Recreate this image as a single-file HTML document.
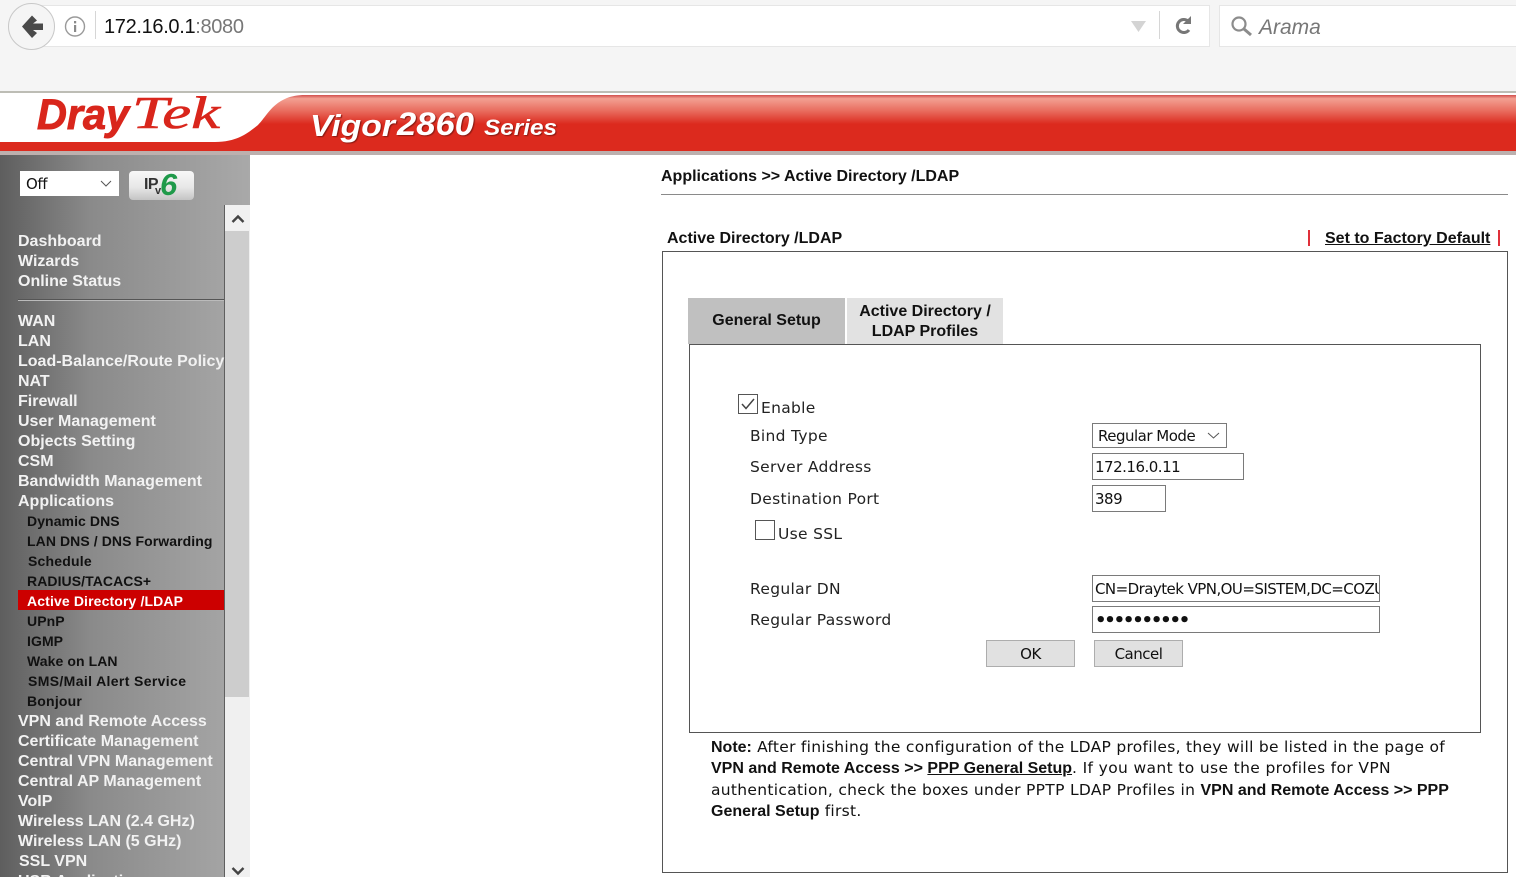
<!DOCTYPE html>
<html><head><meta charset="utf-8"><title>Vigor2860</title>
<style>
html,body{margin:0;padding:0;background:#fff;overflow:hidden}
html{width:1516px;height:877px}
body{width:1516px;height:877px;position:relative;overflow:hidden;font-family:"Liberation Sans",sans-serif;color:#000}
.a{position:absolute;white-space:nowrap}
.m,.s{position:absolute;white-space:nowrap;height:20px;line-height:20px;font-weight:bold}
.m{left:18px;font-size:16px;color:#f2f2f2}
.s{left:27px;font-size:14px;color:#111;letter-spacing:.08px}
.t{position:absolute;white-space:nowrap;font-family:"DejaVu Sans",sans-serif;font-size:15.5px;line-height:20px;color:#222;letter-spacing:.3px}
.n{position:absolute;left:711px;white-space:nowrap;font-family:"DejaVu Sans",sans-serif;font-size:15.5px;line-height:21px;color:#111;letter-spacing:.28px}
.n b{font-family:"Liberation Sans",sans-serif;font-size:16px;letter-spacing:0}
.i{position:absolute;box-sizing:border-box;border:1px solid #7a7a7a;background:#fff;font-family:"DejaVu Sans",sans-serif;font-size:15px;line-height:27px;padding-left:2px;white-space:nowrap;overflow:hidden;color:#111;letter-spacing:-.5px}
.b{position:absolute;box-sizing:border-box;border:1px solid #adadad;background:#e1e1e1;font-family:"DejaVu Sans",sans-serif;font-size:15px;line-height:26px;text-align:center;color:#111;height:27px;width:89px;top:640px;letter-spacing:-.5px}
</style></head><body>

<!-- browser chrome -->
<div class="a" style="left:0;top:0;width:1516px;height:91px;background:#f5f5f5"></div>
<div class="a" style="left:28px;top:5px;width:1182px;height:42px;box-sizing:border-box;background:#fff;border:1px solid #e6e6e6"></div>
<div class="a" style="left:1219px;top:5px;width:300px;height:42px;box-sizing:border-box;background:#fff;border:1px solid #e6e6e6"></div>
<div class="a" style="left:8px;top:3px;width:47px;height:47px;box-sizing:border-box;border-radius:50%;background:#f5f5f5;border:1px solid #c8c8c8"></div>
<svg class="a" style="left:0;top:0" width="1516" height="50" viewBox="0 0 1516 50">
<path d="M22 26.500 L32 15.500 L37 20.500 L33 23.500 H43 V30 H33 L37 33 L32 38 Z" fill="#4a4a4a"/>
<circle cx="75" cy="26.500" r="9.500" fill="none" stroke="#9a9a9a" stroke-width="1.400"/>
<rect x="74" y="25" width="2.200" height="7" fill="#8a8a8a"/><rect x="74" y="21" width="2.200" height="2.400" fill="#8a8a8a"/>
<rect x="95" y="11" width="1" height="28" fill="#d6d6d6"/>
<path d="M1131 21 H1146 L1138.500 32 Z" fill="#d4d4d4"/>
<rect x="1159" y="11" width="1" height="28" fill="#d6d6d6"/>
<path d="M1189 30 A6.500 6.500 0 1 1 1188 21" fill="none" stroke="#777" stroke-width="3"/>
<path d="M1183 24 L1191 24 L1191 16 Z" fill="#777"/>
<circle cx="1239" cy="24" r="6.500" fill="none" stroke="#8c8c8c" stroke-width="2.200"/>
<path d="M1244 29 L1251 35" stroke="#8c8c8c" stroke-width="3"/>
</svg>
<div class="a" style="left:104px;top:14px;font-size:20px;line-height:27px;color:#111;letter-spacing:-.33px">172.16.0.1<span style="color:#777">:8080</span></div>
<div class="a" style="left:1259px;top:14px;font-size:21px;line-height:27px;font-style:italic;color:#777">Arama</div>

<!-- banner -->
<div class="a" style="left:0;top:91px;width:1516px;height:2px;background:#bdbdb5"></div>
<svg class="a" style="left:0;top:93px" width="1516" height="62" viewBox="0 0 1516 62">
<defs><linearGradient id="r" gradientUnits="userSpaceOnUse" x1="0" y1="1" x2="0" y2="59"><stop offset="0" stop-color="#c8393a"/><stop offset=".08" stop-color="#f3a092"/><stop offset=".3" stop-color="#e86a5c"/><stop offset=".52" stop-color="#dc2a1e"/><stop offset="1" stop-color="#dc2a1e"/></linearGradient></defs>
<rect width="1516" height="62" fill="#fff"/>
<path d="M0 49 H215 C238 49 249 39 258 32 C268 22 275 2 305 2 H1516 V59 H0 Z" fill="url(#r)"/>
<rect y="58" width="1516" height="4" fill="#bcb0ae"/>
<text x="37" y="36" font-family="Liberation Sans" font-weight="bold" font-style="italic" font-size="43" fill="#d9261c" textLength="92" lengthAdjust="spacingAndGlyphs" stroke="#d9261c" stroke-width="1">Dray</text>
<text x="132" y="35" font-family="Liberation Serif" font-style="italic" font-size="46" fill="#d9261c" textLength="88" lengthAdjust="spacingAndGlyphs" stroke="#d9261c" stroke-width=".6">Tek</text>
<text x="310" y="43" font-family="Liberation Sans" font-weight="bold" font-style="italic" font-size="31" fill="#fff" textLength="85" lengthAdjust="spacingAndGlyphs" style="text-shadow:1px 1px 1px #8a1a12">Vigor</text>
<text x="397" y="42" font-family="Liberation Sans" font-weight="bold" font-style="italic" font-size="32" fill="#fff" textLength="77" lengthAdjust="spacingAndGlyphs" style="text-shadow:1px 1px 1px #8a1a12">2860</text>
<text x="484" y="42" font-family="Liberation Sans" font-weight="bold" font-style="italic" font-size="22" fill="#fff" textLength="73" lengthAdjust="spacingAndGlyphs" style="text-shadow:1px 1px 1px #8a1a12">Series</text>
</svg>

<!-- sidebar -->
<div class="a" style="left:0;top:155px;width:250px;height:722px;background:linear-gradient(90deg,#5e5e5e 0,#8a8a8a 90px,#a9a9a9 250px)"></div>
<div class="a" style="left:20px;top:171px;width:99px;height:25px;background:#fff"></div>
<div class="a" style="left:26px;top:174px;font-family:'DejaVu Sans',sans-serif;font-size:15px;line-height:20px;color:#111;letter-spacing:-.4px">Off</div>
<svg class="a" style="left:100px;top:180px" width="12" height="8"><path d="M1 1 L6 6 L11 1" fill="none" stroke="#555" stroke-width="1"/></svg>
<div class="a" style="left:129px;top:171px;width:65px;height:29px;border-radius:4px;background:linear-gradient(#f8f8f8,#e8e8e8 55%,#c4c4c4)"></div>
<div class="a" style="left:144px;top:175px;font-weight:bold;font-size:16px;line-height:20px;color:#333;letter-spacing:-.6px">IP</div>
<div class="a" style="left:155px;top:185px;font-weight:bold;font-size:11px;line-height:12px;color:#333">v</div>
<div class="a" style="left:160px;top:170px;font-weight:bold;font-style:italic;font-size:31px;line-height:30px;color:#1f9a4a">6</div>

<div class="a" style="left:225px;top:205px;width:25px;height:672px;background:#f0f0f0"></div>
<div class="a" style="left:225px;top:205px;width:25px;height:25px;background:#f1f1f1"></div>
<div class="a" style="left:225px;top:231px;width:24px;height:466px;background:#cdcdcd"></div>
<div class="a" style="left:224px;top:205px;width:1px;height:672px;background:#5f5f5f"></div>
<svg class="a" style="left:225px;top:205px" width="25" height="25"><path d="M7.500 17 L13 11.500 L18.500 17" fill="none" stroke="#444" stroke-width="2.400"/></svg>
<svg class="a" style="left:225px;top:862px" width="25" height="15"><path d="M7.500 6 L13 11.500 L18.500 6" fill="none" stroke="#444" stroke-width="2.400"/></svg>
<div class="a" style="left:18px;top:299px;width:206px;height:1px;background:#555"></div>
<div class="a" style="left:18px;top:300px;width:206px;height:1px;background:#bbb"></div>

<div class="m" style="top:230px;margin-top:1.500px">Dashboard</div>
<div class="m" style="top:250px;margin-top:1.500px">Wizards</div>
<div class="m" style="top:270px;margin-top:1.500px">Online Status</div>
<div class="m" style="top:310px;margin-top:1.500px">WAN</div>
<div class="m" style="top:330px;margin-top:1.500px">LAN</div>
<div class="m" style="top:350px;margin-top:1.500px">Load-Balance/Route Policy</div>
<div class="m" style="top:370px;margin-top:1.500px">NAT</div>
<div class="m" style="top:390px;margin-top:1.500px">Firewall</div>
<div class="m" style="top:410px;margin-top:1.500px">User Management</div>
<div class="m" style="top:430px;margin-top:1.500px">Objects Setting</div>
<div class="m" style="top:450px;margin-top:1.500px">CSM</div>
<div class="m" style="top:470px;margin-top:1.500px">Bandwidth Management</div>
<div class="m" style="top:490px;margin-top:1.500px">Applications</div>
<div class="s" style="top:511px">Dynamic DNS</div>
<div class="s" style="top:531px">LAN DNS / DNS Forwarding</div>
<div class="s" style="top:551px;left:28px;letter-spacing:.2px">Schedule</div>
<div class="s" style="top:571px">RADIUS/TACACS+</div>
<div class="a" style="left:18px;top:590px;width:206px;height:20px;background:#cc0000"></div>
<div class="s" style="top:591px;color:#fff;letter-spacing:.13px">Active Directory /LDAP</div>
<div class="s" style="top:611px">UPnP</div>
<div class="s" style="top:631px">IGMP</div>
<div class="s" style="top:651px">Wake on LAN</div>
<div class="s" style="top:671px;left:28px;letter-spacing:.36px">SMS/Mail Alert Service</div>
<div class="s" style="top:691px;letter-spacing:.2px">Bonjour</div>
<div class="m" style="top:712px">VPN and Remote Access</div>
<div class="m" style="top:732px">Certificate Management</div>
<div class="m" style="top:752px">Central VPN Management</div>
<div class="m" style="top:772px">Central AP Management</div>
<div class="m" style="top:792px">VoIP</div>
<div class="m" style="top:812px">Wireless LAN (2.4 GHz)</div>
<div class="m" style="top:832px">Wireless LAN (5 GHz)</div>
<div class="m" style="top:852px;left:19px">SSL VPN</div>
<div class="m" style="top:872px">USB Application</div>

<!-- main -->
<div class="a" style="left:661px;top:167px;font-weight:bold;font-size:16px;line-height:20px;color:#111">Applications &gt;&gt; Active Directory /LDAP</div>
<div class="a" style="left:661px;top:194px;width:847px;height:1px;background:#8a8a8a"></div>
<div class="a" style="left:667px;top:229px;font-weight:bold;font-size:16px;line-height:20px;color:#111">Active Directory /LDAP</div>
<div class="a" style="left:1308px;top:230px;width:2px;height:16px;background:#e0303a"></div>
<div class="a" style="left:1325px;top:229px;font-weight:bold;font-size:16px;line-height:20px;color:#111;text-decoration:underline">Set to Factory Default</div>
<div class="a" style="left:1498px;top:230px;width:2px;height:16px;background:#e0303a"></div>

<div class="a" style="left:662px;top:251px;width:846px;height:622px;box-sizing:border-box;border:1px solid #555"></div>
<div class="a" style="left:688px;top:298px;width:157px;height:46px;background:#c0c0c0;font-weight:bold;font-size:16px;line-height:46px;text-align:center;color:#111">General Setup</div>
<div class="a" style="left:847px;top:298px;width:156px;height:46px;background:#e2e2e2;font-weight:bold;font-size:16px;line-height:20px;text-align:center;color:#111;padding-top:3.500px;box-sizing:border-box">Active Directory /<br>LDAP Profiles</div>
<div class="a" style="left:689px;top:344px;width:792px;height:389px;box-sizing:border-box;border:1px solid #555"></div>

<svg class="a" style="left:738px;top:394px" width="20" height="20"><rect x=".5" y=".5" width="19" height="19" fill="#fff" stroke="#555"/><path d="M4 10 L8 14.500 L16 5" fill="none" stroke="#444" stroke-width="1.500"/></svg>
<div class="t" style="left:761px;top:398px">Enable</div>
<div class="t" style="left:750px;top:426px">Bind Type</div>
<div class="t" style="left:750px;top:457px">Server Address</div>
<div class="t" style="left:750px;top:489px">Destination Port</div>
<div class="a" style="left:755px;top:520px;width:20px;height:20px;box-sizing:border-box;border:1px solid #555;background:#fff"></div>
<div class="t" style="left:778px;top:524px">Use SSL</div>
<div class="t" style="left:750px;top:579px">Regular DN</div>
<div class="t" style="left:750px;top:610px">Regular Password</div>

<div class="i" style="left:1092px;top:423px;width:135px;height:25px;padding-left:5px;line-height:24px">Regular Mode</div>
<svg class="a" style="left:1207px;top:432px" width="13" height="8"><path d="M1 1 L6.500 6 L12 1" fill="none" stroke="#555" stroke-width="1"/></svg>
<div class="i" style="left:1092px;top:453px;width:152px;height:27px">172.16.0.11</div>
<div class="i" style="left:1092px;top:485px;width:74px;height:27px">389</div>
<div class="i" style="left:1092px;top:575px;width:288px;height:27px;letter-spacing:-.55px">CN=Draytek VPN,OU=SISTEM,DC=COZUM</div>
<div class="i" style="left:1092px;top:606px;width:288px;height:27px;font-weight:bold;font-size:18px;line-height:28px;letter-spacing:-2.200px">••••••••••</div>
<div class="b" style="left:986px">OK</div>
<div class="b" style="left:1094px">Cancel</div>

<div class="n" style="top:737px"><b>Note:</b> After finishing the configuration of the LDAP profiles, they will be listed in the page of</div>
<div class="n" style="top:758px;letter-spacing:.36px"><b>VPN and Remote Access &gt;&gt; <u>PPP General Setup</u></b>. If you want to use the profiles for VPN</div>
<div class="n" style="top:780px;letter-spacing:.3px">authentication, check the boxes under PPTP LDAP Profiles in <b>VPN and Remote Access &gt;&gt; PPP</b></div>
<div class="n" style="top:801px"><b>General Setup</b> first.</div>
</body></html>
